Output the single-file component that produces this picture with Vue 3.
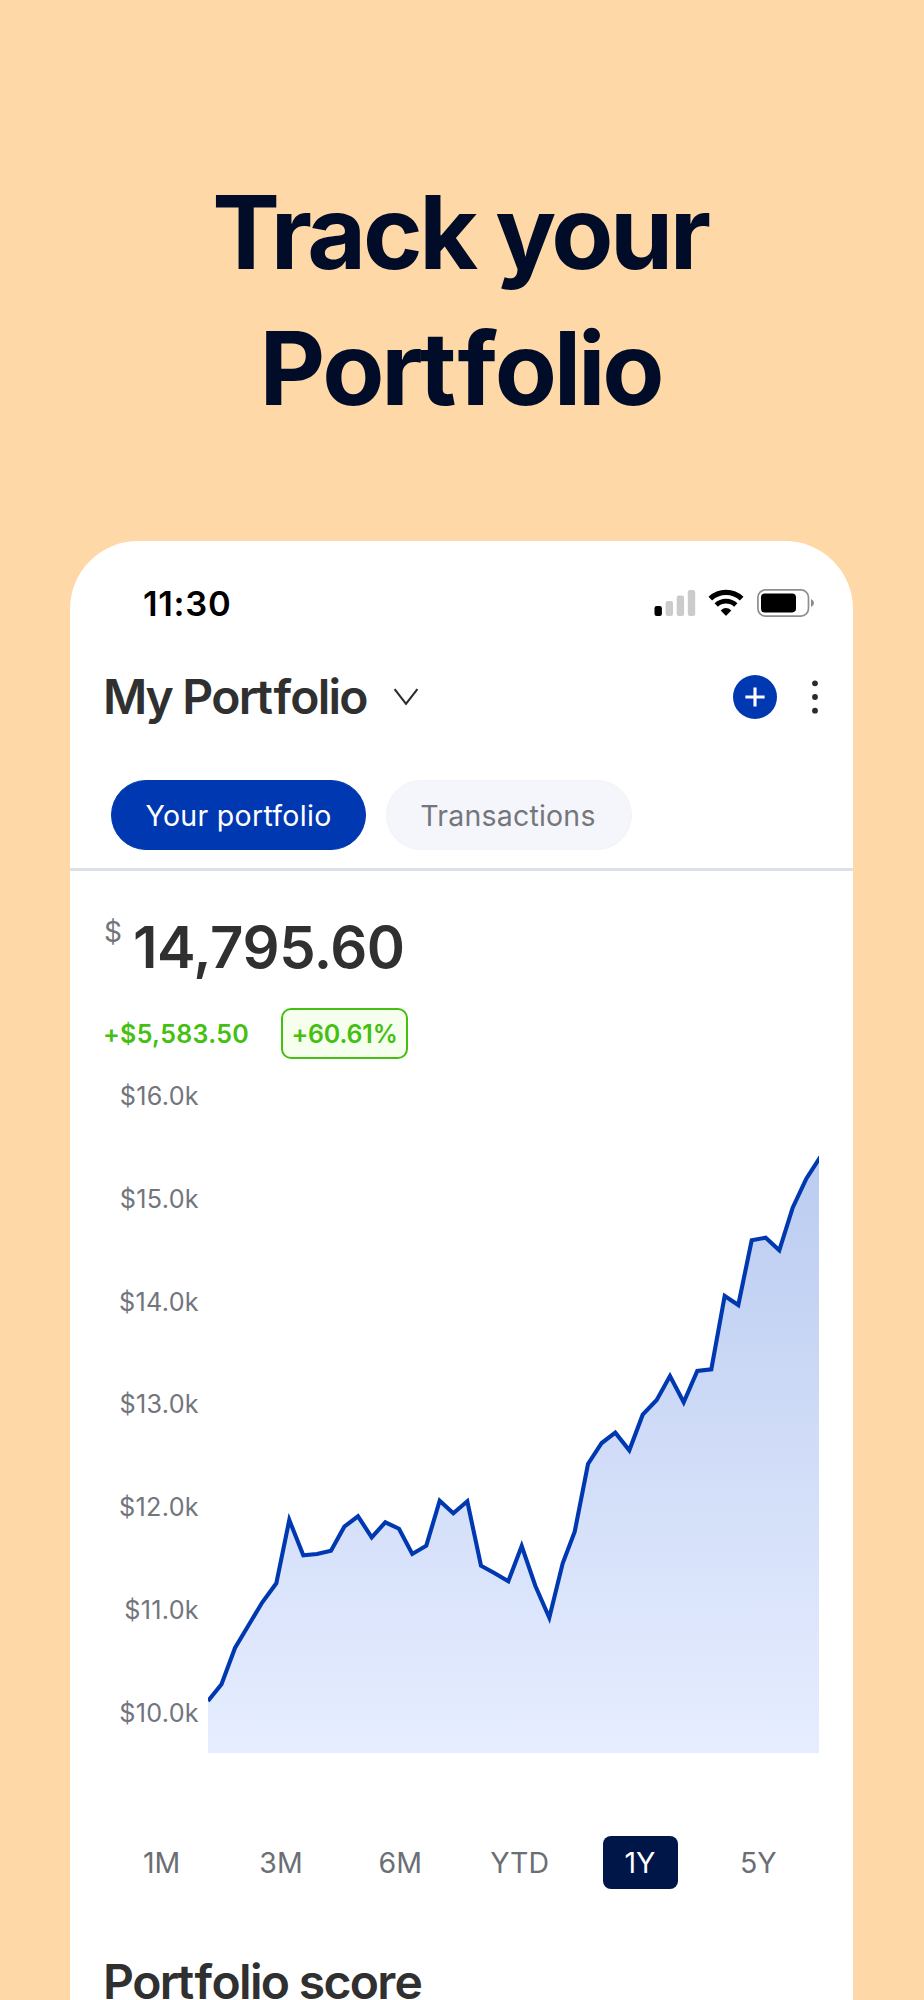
<template>
  <div class="page">
    <h1 class="headline">
      <span class="headline-first">Track your</span>
      <span class="headline-second">Por<span class="loose">t</span>folio</span>
    </h1>

    <div class="phone">
      <div class="status-bar">
        <span class="time">11:30</span>
        <div class="status-icons">
          <svg class="signal" width="42" height="28" viewBox="0 0 42 28">
            <rect x="0.5" y="17" width="7.4" height="10" rx="2.2" fill="#000" />
            <rect x="11.6" y="12" width="7.4" height="15" rx="2.2" fill="#cbcbcb" />
            <rect x="22.7" y="6.5" width="7.4" height="20.5" rx="2.2" fill="#cbcbcb" />
            <rect x="33.8" y="1" width="7.4" height="26" rx="2.2" fill="#cbcbcb" />
          </svg>
          <svg class="wifi" width="36" height="28" viewBox="0 0 36 28">
            <path d="M2.3 9.7 A22.8 22.8 0 0 1 33.7 9.7" fill="none" stroke="#000" stroke-width="5.2" />
            <path d="M8.2 16 A14.2 14.2 0 0 1 27.8 16" fill="none" stroke="#000" stroke-width="4.8" />
            <path d="M12.7 21.4 Q18 16.8 23.3 21.4 L18.7 26.3 Q18 27 17.3 26.3 Z" fill="#000" />
          </svg>
          <svg class="battery" width="58" height="28" viewBox="0 0 58 28">
            <rect x="0.9" y="0.9" width="50.6" height="26.2" rx="7.6" fill="none" stroke="#8f8f8f" stroke-width="1.7" />
            <rect x="4" y="4.4" width="35" height="19" rx="3.8" fill="#000" />
            <path d="M54 10 Q57 11.4 57 14 Q57 16.6 54 18 Z" fill="#8a8a8a" />
          </svg>
        </div>
      </div>

      <div class="header">
        <span class="title">My Por<span class="loose">t</span>folio</span>
        <svg class="chevron" width="26" height="18" viewBox="0 0 26 18">
          <path d="M1.6 1.2 L13 15.8 L24.4 1.2" fill="none" stroke="#2b2b2b" stroke-width="2.1" />
        </svg>
        <svg class="add" width="44" height="44" viewBox="0 0 44 44">
          <circle cx="22" cy="22" r="22" fill="#0038b1" />
          <path d="M12.4 22 H31.6 M22 12.4 V31.6" stroke="#fff" stroke-width="3.1" />
        </svg>
        <svg class="more" width="6" height="34" viewBox="0 0 6 34">
          <circle cx="3" cy="3.3" r="2.9" fill="#2b2b2b" />
          <circle cx="3" cy="17" r="2.9" fill="#2b2b2b" />
          <circle cx="3" cy="30.7" r="2.9" fill="#2b2b2b" />
        </svg>
      </div>

      <div class="tabs">
        <div class="tab active"><span>Your portfolio</span></div>
        <div class="tab"><span>Transactions</span></div>
      </div>

      <div class="amount">
        <span class="currency">$</span>
        <span class="value">14,795.60</span>
      </div>

      <div class="change">
        <span class="change-value">+$5,583.50</span>
        <span class="change-badge"><span>+60.61%</span></span>
      </div>

      <div class="chart">
        <div class="axis">
          <span v-for="label in axisLabels" :key="label">{{ label }}</span>
        </div>
        <svg class="plot" width="611" height="672" viewBox="0 0 611 672">
          <defs>
            <linearGradient id="area" x1="0" y1="0" x2="0" y2="1">
              <stop offset="0" stop-color="#bbccf0" />
              <stop offset="1" stop-color="#e6edff" />
            </linearGradient>
          </defs>
          <polygon :points="areaPoints" fill="url(#area)" />
          <polyline :points="linePoints" fill="none" stroke="#0038b1" stroke-width="4.1" />
        </svg>
      </div>

      <div class="ranges">
        <div
          v-for="range in ranges"
          :key="range"
          class="range"
          :class="{ selected: selectedRange === range }"
          @click="selectedRange = range"
        >
          <span>{{ range }}</span>
        </div>
      </div>

      <h2 class="section-title">Por<span class="loose">t</span>folio score</h2>
    </div>
  </div>
</template>

<script setup>
import { ref, computed } from 'vue'

const axisLabels = ['$16.0k', '$15.0k', '$14.0k', '$13.0k', '$12.0k', '$11.0k', '$10.0k']
const ranges = ['1M', '3M', '6M', 'YTD', '1Y', '5Y']
const selectedRange = ref('1Y')

const points = [
  [0, 620], [13.5, 603.3], [27, 567], [40.7, 544], [54.3, 521.3], [68.3, 502.3],
  [81.3, 439], [95.3, 474.3], [109, 473], [123, 469.7], [136.3, 445.7], [150, 435.3],
  [163.7, 456.3], [177.3, 441.3], [191, 447.7], [204.3, 473], [218.3, 464.7],
  [231.7, 419.7], [245.3, 432.3], [259.3, 420.3], [273, 484.7], [286.3, 492],
  [300.3, 500.3], [313.7, 465], [327.3, 504.7], [341.3, 536.7], [354.7, 482.3],
  [366.7, 450.7], [380, 383], [393.7, 362], [407.3, 351.7], [421.3, 369.3],
  [434.7, 333.7], [448.7, 319], [462, 295], [475.7, 321.3], [489.3, 290],
  [503.3, 288.3], [516.7, 215], [530.3, 224], [543.7, 159.3], [557.7, 156.7],
  [571.3, 169.3], [584.7, 126.7], [598.3, 97.7], [613, 75]
]

const linePoints = computed(() => points.map((p) => p.join(',')).join(' '))
const areaPoints = computed(() => `0,672 ${linePoints.value} 613,672`)
</script>

<style>
body {
  margin: 0;
  background-color: #ffd8a8;
}
</style>

<style scoped>
.page {
  box-sizing: border-box;
  width: 924px;
  height: 2000px;
  padding: 164px 71px 0 70px;
  overflow: hidden;
  background-color: #ffd8a8;
  font-family: Inter, "Liberation Sans", sans-serif;
  display: flex;
  flex-direction: column;
}

.headline {
  margin: 0 0 105px;
  font-size: 101.5px;
  line-height: 136px;
  font-weight: 700;
  text-align: center;
  color: #000c28;
  display: flex;
  flex-direction: column;
}

.headline-first {
  padding-right: 3px;
  letter-spacing: -3.4px;
}

.headline-second {
  padding-right: 2px;
  font-kerning: none;
  letter-spacing: -3.2px;
}

/* opens up the t-f pair, which collides at tight tracking */
.loose {
  letter-spacing: 0.01em;
}

.phone {
  box-sizing: border-box;
  height: 1500px;
  flex: none;
  border-radius: 68px 68px 0 0;
  background-color: #fff;
}

.status-bar {
  height: 124px;
  padding: 0 38px 0 73px;
  display: flex;
  justify-content: space-between;
  align-items: center;
}

.time {
  font-size: 34.5px;
  font-weight: 600;
  letter-spacing: 0.7px;
  color: #000;
}

.status-icons {
  display: flex;
  align-items: center;
}

.wifi {
  margin: 0 13px 0 12px;
}

.header {
  height: 64px;
  padding: 0 35px 0 33px;
  display: flex;
  align-items: center;
}

.title {
  width: 263px;
  font-size: 48px;
  line-height: 64px;
  font-weight: 600;
  font-kerning: none;
  letter-spacing: -1.8px;
  white-space: nowrap;
  color: #303030;
}

.chevron {
  margin-left: 27px;
}

.add {
  margin-left: auto;
  margin-right: 35px;
}

.tabs {
  padding: 51px 0 18px 41px;
  border-bottom: 3px solid #dae1ea;
  display: flex;
  gap: 20px;
}

.tab {
  box-sizing: border-box;
  width: 246px;
  height: 70px;
  padding-right: 2px;
  border-radius: 35px;
  border: 1px solid #f1f3f8;
  background-color: #f5f6fb;
  color: #75767b;
  font-size: 28.5px;
  letter-spacing: 0.2px;
  display: flex;
  align-items: center;
  justify-content: center;
}

.tab.active {
  width: 255px;
  padding-right: 0;
  border-color: #0038b1;
  background-color: #0038b1;
  color: #fff;
  letter-spacing: 0.3px;
}

.amount {
  height: 137px;
  padding-left: 34px;
  display: flex;
}

.currency {
  width: 29px;
  padding-top: 43px;
  font-size: 28px;
  line-height: 36px;
  color: #73757d;
}

.value {
  padding-top: 41px;
  font-size: 58px;
  line-height: 70px;
  font-weight: 600;
  letter-spacing: -0.45px;
  color: #303030;
}

.change {
  height: 51px;
  padding-left: 33px;
  display: flex;
  align-items: center;
  font-size: 25px;
  font-weight: 600;
  color: #44bf12;
}

.change-value {
  width: 178px;
  letter-spacing: 0.3px;
}

.change-badge {
  box-sizing: border-box;
  width: 127px;
  height: 51px;
  border: 2px solid #44bf12;
  border-radius: 10px;
  background-color: #f6ffed;
  letter-spacing: -0.2px;
  display: flex;
  align-items: center;
  justify-content: center;
}

.chart {
  height: 672px;
  margin-top: 22px;
  display: flex;
}

.axis {
  width: 129px;
  height: 648px;
  margin-right: 9px;
  display: flex;
  flex-direction: column;
  justify-content: space-between;
  text-align: right;
  font-size: 25.2px;
  line-height: 31px;
  letter-spacing: 0.3px;
  color: #73757d;
}

.plot {
  display: block;
}

.ranges {
  width: 716px;
  height: 53px;
  margin: 83px 0 0 33px;
  display: grid;
  grid-template-columns: repeat(6, 1fr);
  justify-items: center;
}

.range {
  box-sizing: border-box;
  width: 75px;
  height: 53px;
  padding: 0 2px 1px 0;
  border-radius: 8px;
  font-size: 28.5px;
  color: #6c6e76;
  display: flex;
  align-items: center;
  justify-content: center;
  cursor: pointer;
}

.range.selected {
  margin-left: 2px;
  background-color: #001548;
  color: #fff;
}

.section-title {
  margin: 63px 0 0 33px;
  font-size: 48px;
  line-height: 60px;
  font-weight: 600;
  font-kerning: none;
  letter-spacing: -1.7px;
  color: #303030;
}
</style>
